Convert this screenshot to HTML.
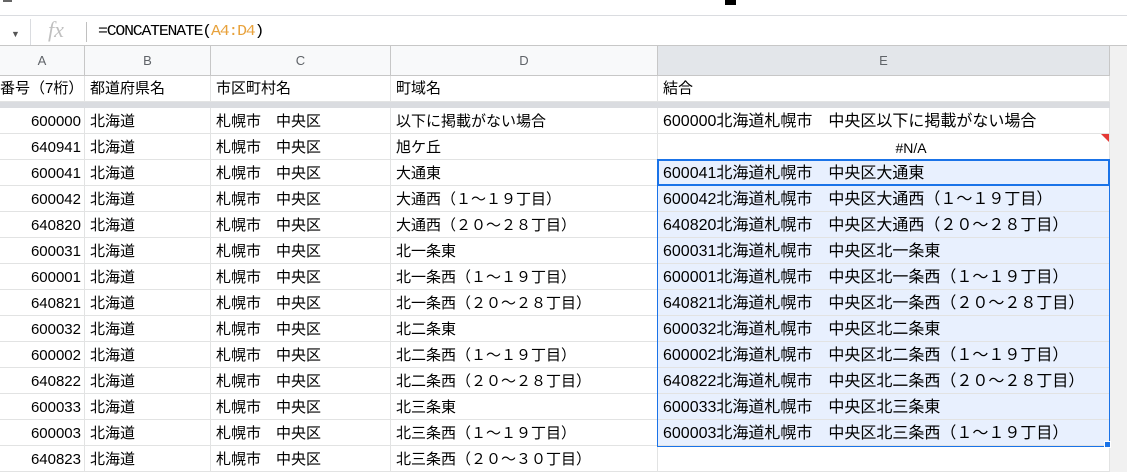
<!DOCTYPE html>
<html><head><meta charset="utf-8"><style>
*{margin:0;padding:0;box-sizing:border-box}
body{width:1127px;height:472px;overflow:hidden;background:#fff;font-family:"Liberation Sans","Noto Sans CJK JP",sans-serif;position:relative}
.abs{position:absolute}
.cell{position:absolute;height:26px;line-height:28px;font-size:15px;color:#000;white-space:nowrap;overflow:hidden;border-bottom:1px solid #e2e3e3;border-right:1px solid #e2e3e3;padding-left:5px}
.num{text-align:right;padding-right:3px;padding-left:0}
.ch{position:absolute;top:46px;height:30px;line-height:30px;text-align:center;font-size:13px;color:#5f6368;background:#f8f9fa;border-right:1px solid #c7c7c7;border-bottom:1px solid #c7c7c7}
</style></head><body>
<div class="abs" style="left:0;top:0;width:1127px;height:16px;border-bottom:1px solid #dadce0"></div>
<div class="abs" style="left:3px;top:0;width:9px;height:2px;background:#666"></div>
<div class="abs" style="left:725px;top:0;width:11px;height:5px;background:#000"></div>
<div class="abs" style="left:11px;top:29px;font-size:9px;color:#555">▼</div>
<div class="abs" style="left:30px;top:19px;height:26px;border-left:1px solid #dadce0"></div>
<div class="abs" style="left:48px;top:17px;font-family:'Liberation Serif',serif;font-style:italic;font-size:22px;color:#c0c0c0">fx</div>
<div class="abs" style="left:86px;top:22px;width:1px;height:20px;background:#c0c0c0"></div>
<div class="abs" style="left:98px;top:23px;font-size:15px;color:#000;font-family:'Liberation Mono','DejaVu Sans Mono',monospace;letter-spacing:-1.1px;transform:scaleX(1.1);transform-origin:left">=CONCATENATE(<span style="color:#e8a23c">A4:D4</span>)</div>
<div class="abs" style="left:0;top:45px;width:1127px;height:1px;background:#c7c7c7"></div>

<div class="ch" style="left:0;width:85px">A</div>
<div class="ch" style="left:85px;width:126px">B</div>
<div class="ch" style="left:211px;width:180px">C</div>
<div class="ch" style="left:391px;width:267px">D</div>
<div class="ch" style="left:658px;width:452px;background:#e3e6ea">E</div>
<div class="abs" style="left:1110px;top:46px;width:17px;height:426px;background:#f1f1f1"></div>

<div id="g"></div>
<script>
const rows=[
["番号（7桁）","都道府県名","市区町村名","町域名","結合"],
["600000","北海道","札幌市　中央区","以下に掲載がない場合","600000北海道札幌市　中央区以下に掲載がない場合"],
["640941","北海道","札幌市　中央区","旭ケ丘","#N/A"],
["600041","北海道","札幌市　中央区","大通東",""],
["600042","北海道","札幌市　中央区","大通西（１～１９丁目）",""],
["640820","北海道","札幌市　中央区","大通西（２０～２８丁目）",""],
["600031","北海道","札幌市　中央区","北一条東",""],
["600001","北海道","札幌市　中央区","北一条西（１～１９丁目）",""],
["640821","北海道","札幌市　中央区","北一条西（２０～２８丁目）",""],
["600032","北海道","札幌市　中央区","北二条東",""],
["600002","北海道","札幌市　中央区","北二条西（１～１９丁目）",""],
["640822","北海道","札幌市　中央区","北二条西（２０～２８丁目）",""],
["600033","北海道","札幌市　中央区","北三条東",""],
["600003","北海道","札幌市　中央区","北三条西（１～１９丁目）",""],
["640823","北海道","札幌市　中央区","北三条西（２０～３０丁目）",""]];
const L=[0,85,211,391,658,1110];
let h="";
rows.forEach((r,i)=>{
 let top=i==0?76:108+(i-1)*26;
 if(i>=3&&i<=13&&r[4]=="")r[4]=r[0]+r[1]+r[2]+r[3];
 for(let c=0;c<5;c++){
  let cls="cell"+((c==0&&i>0)?" num":"");
  let st=`left:${L[c]}px;top:${top}px;width:${L[c+1]-L[c]}px;`;
  if(i==0)st+="line-height:26px;";
  if(c==0&&i==0)st+="text-align:right;padding:0 2px 0 0;";
  if(c==4&&i>=3&&i<=13)st+="background:#e8f0fe;";
  if(c==4&&i==2)st+="text-align:center;padding-left:55px;font-size:14px;";
  if(c==4&&i>=1&&i!=2)st+="font-size:16px;padding-left:5px;";
  let t=r[c];
  h+=`<div class="${cls}" style="${st}">${t}</div>`;
 }
});
document.getElementById("g").innerHTML=h;
</script>
<div class="abs" style="left:0;top:102px;width:1110px;height:6px;background:#dadce0"></div>
<div class="abs" style="left:657px;top:160px;width:453px;height:287px;border:1px solid #1a73e8"></div>
<div class="abs" style="left:657px;top:159px;width:453px;height:27px;border:2px solid #1a73e8"></div>
<div class="abs" style="left:1104px;top:441px;width:7px;height:7px;background:#1a73e8;border:1px solid #fff"></div>
<div class="abs" style="left:1101px;top:134px;width:0;height:0;border-left:8px solid transparent;border-top:8px solid #e53935"></div>
</body></html>
